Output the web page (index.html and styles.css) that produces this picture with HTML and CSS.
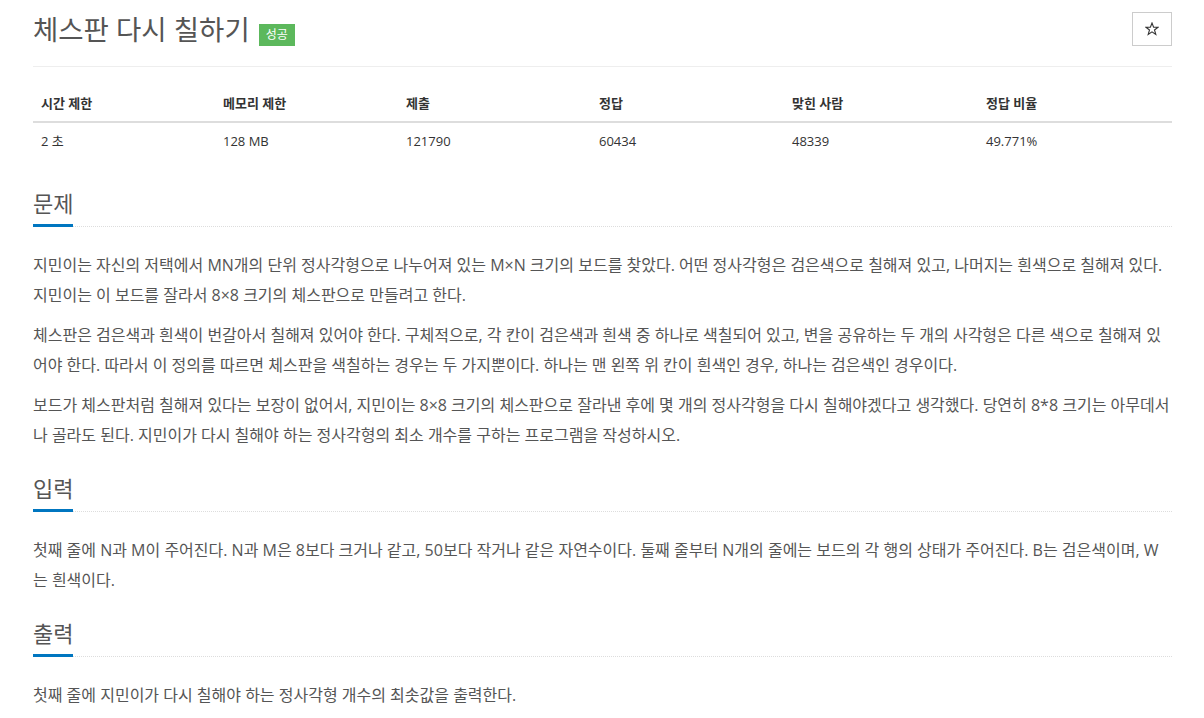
FILE: index.html
```html
<!DOCTYPE html>
<html lang="ko">
<head>
    <meta charset="UTF-8">
    <meta name="viewport" content="width=device-width, initial-scale=1.0">
    <title>체스판 다시 칠하기</title>
    <link rel="stylesheet" href="styles.css">
</head>
<body>
    <div class="page">
        <div class="page-header">
            <h1 class="problem-title">
                <span>체스판 다시 칠하기</span>
                <span class="label-success">성공</span>
            </h1>
            <button class="star-btn" type="button" aria-label="즐겨찾기">
                <svg width="14" height="14" viewBox="0 0 14 14">
                    <path d="M7 1 L8.6 5.2 L13 5.3 L9.5 8 L10.8 12.4 L7 9.8 L3.2 12.4 L4.5 8 L1 5.3 L5.4 5.2 Z" fill="none" stroke="#333" stroke-width="1.1" stroke-linejoin="miter"/>
                </svg>
            </button>
        </div>

        <table class="problem-info">
            <thead>
                <tr>
                    <th class="col-time">시간 제한</th>
                    <th class="col-memory">메모리 제한</th>
                    <th class="col-submit">제출</th>
                    <th class="col-answer">정답</th>
                    <th class="col-solved">맞힌 사람</th>
                    <th>정답 비율</th>
                </tr>
            </thead>
            <tbody>
                <tr>
                    <td>2 초</td>
                    <td>128 MB</td>
                    <td>121790</td>
                    <td>60434</td>
                    <td>48339</td>
                    <td>49.771%</td>
                </tr>
            </tbody>
        </table>

        <section class="problem-section first">
            <h2 class="headline"><span>문제</span></h2>
            <div class="problem-text">
                <p>지민이는 자신의 저택에서 MN개의 단위 정사각형으로 나누어져 있는 M×N 크기의 보드를 찾았다. 어떤 정사각형은 검은색으로 칠해져 있고, 나머지는 흰색으로 칠해져 있다. 지민이는 이 보드를 잘라서 8×8 크기의 체스판으로 만들려고 한다.</p>
                <p>체스판은 검은색과 흰색이 번갈아서 칠해져 있어야 한다. 구체적으로, 각 칸이 검은색과 흰색 중 하나로 색칠되어 있고, 변을 공유하는 두 개의 사각형은 다른 색으로 칠해져 있어야 한다. 따라서 이 정의를 따르면 체스판을 색칠하는 경우는 두 가지뿐이다. 하나는 맨 왼쪽 위 칸이 흰색인 경우, 하나는 검은색인 경우이다.</p>
                <p>보드가 체스판처럼 칠해져 있다는 보장이 없어서, 지민이는 8×8 크기의 체스판으로 잘라낸 후에 몇 개의 정사각형을 다시 칠해야겠다고 생각했다. 당연히 8*8 크기는 아무데서나 골라도 된다. 지민이가 다시 칠해야 하는 정사각형의 최소 개수를 구하는 프로그램을 작성하시오.</p>
            </div>
        </section>

        <section class="problem-section">
            <h2 class="headline"><span>입력</span></h2>
            <div class="problem-text">
                <p>첫째 줄에 N과 M이 주어진다. N과 M은 8보다 크거나 같고, 50보다 작거나 같은 자연수이다. 둘째 줄부터 N개의 줄에는 보드의 각 행의 상태가 주어진다. B는 검은색이며, W는 흰색이다.</p>
            </div>
        </section>

        <section class="problem-section">
            <h2 class="headline"><span>출력</span></h2>
            <div class="problem-text">
                <p>첫째 줄에 지민이가 다시 칠해야 하는 정사각형 개수의 최솟값을 출력한다.</p>
            </div>
        </section>
    </div>
</body>
</html>
```

FILE: styles.css
```css
/* Basic Reset */
* {
    margin: 0;
    padding: 0;
    box-sizing: border-box;
}
body {
    font-family: "Open Sans", "Noto Sans CJK KR", sans-serif;
    background-color: #fff;
    color: #555;
    font-size: 14px;
}
.page {
    padding: 0 32px 0 33px;
}
/* Title row */
.page-header {
    display: flex;
    justify-content: space-between;
    align-items: center;
    padding: 12px 0 18px;
    border-bottom: 1px solid #eee;
}
.problem-title {
    display: flex;
    align-items: center;
    font-size: 27.5px;
    font-weight: 400;
    line-height: 36px;
    color: #555;
}
.label-success {
    margin-left: 9px;
    margin-top: 10px;
    padding: 3px 7px;
    font-size: 12px;
    line-height: 16px;
    color: #fff;
    background-color: #5cb85c;
}
.star-btn {
    display: flex;
    align-items: center;
    justify-content: center;
    width: 40px;
    height: 34px;
    margin-top: -2px;
    border: 1px solid #ccc;
    background: #fff;
}
/* Info table */
.problem-info {
    width: 100%;
    border-collapse: collapse;
    margin-top: 18px;
    color: #333;
    font-size: 13px;
}
.problem-info th, .problem-info td {
    padding: 8px;
    line-height: 20px;
    text-align: left;
}
.problem-info th {
    font-weight: bold;
    border-bottom: 2px solid #ddd;
}
.col-time { width: 182px; }
.col-memory { width: 183px; }
.col-submit { width: 193px; }
.col-answer { width: 193px; }
.col-solved { width: 194px; }
/* Sections */
.problem-section {
    margin-top: 26px;
}
.problem-section.first {
    margin-top: 32px;
}
.headline {
    display: flex;
    border-bottom: 1px dotted #ddd;
    font-size: 22px;
    font-weight: 400;
    line-height: 24px;
    color: #555;
}
.headline span {
    padding-bottom: 9px;
    border-bottom: 3px solid #0076c0;
    margin-bottom: -1px;
}
.problem-text {
    margin-top: 23px;
    font-size: 16px;
    line-height: 30px;
}
.problem-text p {
    margin-bottom: 10px;
}
```
